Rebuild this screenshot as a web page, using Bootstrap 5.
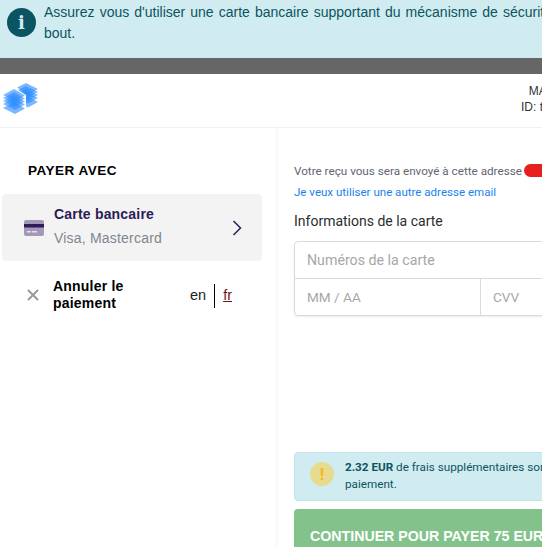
<!DOCTYPE html>
<html lang="fr">
<head>
  <meta charset="UTF-8" />
  <meta name="viewport" content="width=device-width, initial-scale=1.0"/>
  <title>Paiement</title>
  <link href="https://cdn.jsdelivr.net/npm/bootstrap@5.3.3/dist/css/bootstrap.min.css" rel="stylesheet"/>
  <style>
    html, body {
      height: 547px;
      overflow: hidden;
    }

    body {
      font-family: "Liberation Sans", Arial, sans-serif;
      background: #fff;
    }

    .pay-page {
      width: 760px;
    }

    .top-alert {
      height: 58px;
      background: #d1ecf1;
      color: #0c5460;
      font-size: 14px;
      line-height: 21px;
      padding: 2px 0 0 7px;
      gap: 8px;
    }

    .top-alert p {
      width: 654px;
      margin: 0;
      text-align: justify;
    }

    .info-dot {
      width: 29px;
      height: 29px;
      margin-top: 6px;
      background: #0b5563;
      color: #d1ecf1;
      font-family: "DejaVu Serif", serif;
      font-weight: 700;
      font-size: 18px;
      line-height: 29px;
    }

    .dark-strip {
      height: 16px;
      background: #666;
    }

    .pay-header {
      height: 54px;
      border-bottom: 1px solid #f1f1f1;
    }

    .pay-logo {
      margin: 9px 0 0 3px;
    }

    .merchant {
      margin-left: 483px;
      padding-top: 9px;
      font-size: 12px;
      line-height: 16px;
      color: #333;
    }

    .side {
      width: 277px;
      height: 420px;
      padding-left: 2px;
    }

    .side-title {
      margin: 35px 0 15px 26px;
      font-size: 13.5px;
      line-height: 16px;
      font-weight: 700;
      letter-spacing: .5px;
      color: #000;
    }

    .method {
      width: 260px;
      height: 67px;
      background: #f3f3f3;
      border-radius: 4px;
      padding: 0 20px 0 22px;
    }

    .method-text {
      margin-left: 10px;
      margin-top: -3px;
    }

    .method-name {
      font-size: 14px;
      font-weight: 700;
      letter-spacing: .2px;
      color: #2b1b57;
      line-height: 16px;
    }

    .method-sub {
      margin-top: 8px;
      font-size: 14px;
      letter-spacing: .2px;
      line-height: 16px;
      color: #7d8790;
    }

    .cancel-row {
      padding: 17px 0 0 25px;
    }

    .cancel-text {
      width: 100px;
      margin-left: 14px;
      font-size: 14px;
      font-weight: 700;
      line-height: 17px;
      letter-spacing: .2px;
      color: #000;
    }

    .lang {
      font-size: 14.5px;
      color: #222;
      margin: 1px 0 0 37px;
    }

    .lang a {
      color: #6b1414;
    }

    .lang-sep {
      width: 1px;
      height: 24px;
      background: #000;
      margin: 0 8px;
    }

    .main-pane {
      width: 480px;
      height: 420px;
      border-left: 1px solid #f7f7f7;
      box-shadow: -3px 0 4px rgba(0, 0, 0, .015);
      padding: 36px 0 0 16px;
      font-family: Roboto, "Liberation Sans", sans-serif;
    }

    .receipt {
      font-size: 11.7px;
      line-height: 14px;
      color: #5f6770;
    }

    .red-pill {
      display: inline-block;
      width: 120px;
      height: 13px;
      margin-left: 2px;
      border-radius: 7px;
      background: #e81f1f;
      vertical-align: -2px;
    }

    .other-mail {
      display: block;
      margin-top: 7px;
      font-size: 11.55px;
      line-height: 14px;
      color: #1a82ee;
      text-decoration: none;
    }

    .info-label {
      margin-top: 12px;
      font-size: 14px;
      line-height: 20px;
      color: #2c2c2c;
    }

    .card-box {
      margin-top: 10px;
      width: 440px;
      height: 75px;
      border: 1px solid #dadada;
      border-radius: 4px;
      box-shadow: 0 1px 2px rgba(0, 0, 0, .08);
      color: #a7a7a7;
      font-size: 14.2px;
    }

    .card-line {
      height: 37px;
      line-height: 36px;
      padding-left: 12px;
      border-bottom: 1px solid #dadada;
    }

    .card-half {
      font-size: 13.6px;
      line-height: 37px;
      padding-left: 12px;
    }

    .card-date {
      width: 186px;
      border-right: 1px solid #dadada;
    }

    .fee-note {
      margin-top: 136px;
      width: 440px;
      height: 49px;
      background: #d1ecf1;
      border: 1px solid #bee5eb;
      border-radius: 4px;
      color: #0c5460;
      font-size: 11.7px;
      line-height: 17px;
      padding: 6px 0 0 15px;
      gap: 11px;
    }

    .warn-dot {
      width: 24px;
      height: 24px;
      margin-top: 3px;
      background: #e6db8f;
      color: #f5b81e;
      font-size: 17px;
      font-weight: 700;
      line-height: 24px;
    }

    .go-btn {
      margin-top: 8px;
      width: 440px;
      height: 60px;
      background: #83c38b;
      color: #fff;
      font-family: "Liberation Sans", Arial, sans-serif;
      font-size: 14.2px;
      font-weight: 700;
      line-height: 54px;
      padding-left: 16px;
      border-radius: 4px 4px 0 0;
    }
  </style>
</head>
<body>
  <div class="pay-page">
    <div class="top-alert d-flex">
      <div class="info-dot rounded-circle text-center flex-shrink-0">i</div>
      <p>Assurez vous d'utiliser une carte bancaire supportant du mécanisme de sécurité 3D Secure de bout en bout.</p>
    </div>
    <div class="dark-strip"></div>

    <div class="pay-header d-flex">
      <svg class="pay-logo flex-shrink-0" width="35" height="32" viewBox="3 83 35 32" aria-hidden="true">
        <defs>
          <path id="logoBack" d="M17 87.5 26 83 38 89 28 94.5Z"/>
          <path id="logoFront" d="M3 95 14 89 25 95.5 15 101Z"/>
        </defs>
        <g fill="#2a8cff" fill-opacity=".62">
          <use href="#logoBack"/>
          <use href="#logoBack" y="3"/>
          <use href="#logoBack" y="6"/>
          <use href="#logoBack" y="9"/>
          <use href="#logoBack" y="13"/>
        </g>
        <path d="M3 95 14 89 25 95.5V108.5L15 114 3 108Z" fill="#fff" stroke="#fff" stroke-width="2"/>
        <g fill="#2a8cff" fill-opacity=".62">
          <use href="#logoFront"/>
          <use href="#logoFront" y="3"/>
          <use href="#logoFront" y="6"/>
          <use href="#logoFront" y="9"/>
          <use href="#logoFront" y="13"/>
        </g>
      </svg>
      <div class="merchant text-center">MARCHAND<br>ID: test1234567</div>
    </div>

    <div class="d-flex">
      <div class="side flex-shrink-0">
        <div class="side-title">PAYER AVEC</div>
        <div class="method d-flex align-items-center">
          <svg width="20" height="16" viewBox="0 0 20 16" class="flex-shrink-0" aria-hidden="true">
            <rect width="20" height="16" rx="2" fill="#a597b8"/>
            <rect y="4" width="20" height="3.5" fill="#2f1a5c"/>
            <rect x="3" y="11" width="4" height="1.5" fill="#e6e2ec"/>
            <rect x="8" y="11" width="5" height="1.5" fill="#e6e2ec"/>
          </svg>
          <div class="method-text flex-grow-1">
            <div class="method-name">Carte bancaire</div>
            <div class="method-sub">Visa, Mastercard</div>
          </div>
          <svg width="10" height="16" viewBox="0 0 10 16" class="flex-shrink-0" aria-hidden="true">
            <path d="M1.5 1 8.5 8 1.5 15" fill="none" stroke="#2b1b57" stroke-width="1.5"/>
          </svg>
        </div>
        <div class="cancel-row d-flex align-items-center">
          <svg width="12" height="12" viewBox="0 0 12 12" class="flex-shrink-0" aria-hidden="true">
            <path d="M1 1 11 11M11 1 1 11" stroke="#9a9a9a" stroke-width="2"/>
          </svg>
          <div class="cancel-text">Annuler le paiement</div>
          <div class="lang d-flex align-items-center">
            <span>en</span><span class="lang-sep"></span><a href="#">fr</a>
          </div>
        </div>
      </div>

      <div class="main-pane flex-shrink-0">
        <div class="receipt">Votre reçu vous sera envoyé à cette adresse<span class="red-pill"></span></div>
        <a class="other-mail" href="#">Je veux utiliser une autre adresse email</a>
        <div class="info-label">Informations de la carte</div>
        <div class="card-box">
          <div class="card-line">Numéros de la carte</div>
          <div class="d-flex">
            <div class="card-half card-date">MM / AA</div>
            <div class="card-half">CVV</div>
          </div>
        </div>
        <div class="fee-note d-flex">
          <div class="warn-dot rounded-circle text-center flex-shrink-0">!</div>
          <div><strong>2.32 EUR</strong> de frais supplémentaires sont appliqués à ce<br>paiement.</div>
        </div>
        <div class="go-btn">CONTINUER POUR PAYER 75 EUR</div>
      </div>
    </div>
  </div>
  <script src="https://cdn.jsdelivr.net/npm/bootstrap@5.3.3/dist/js/bootstrap.bundle.min.js"></script>
</body>
</html>
